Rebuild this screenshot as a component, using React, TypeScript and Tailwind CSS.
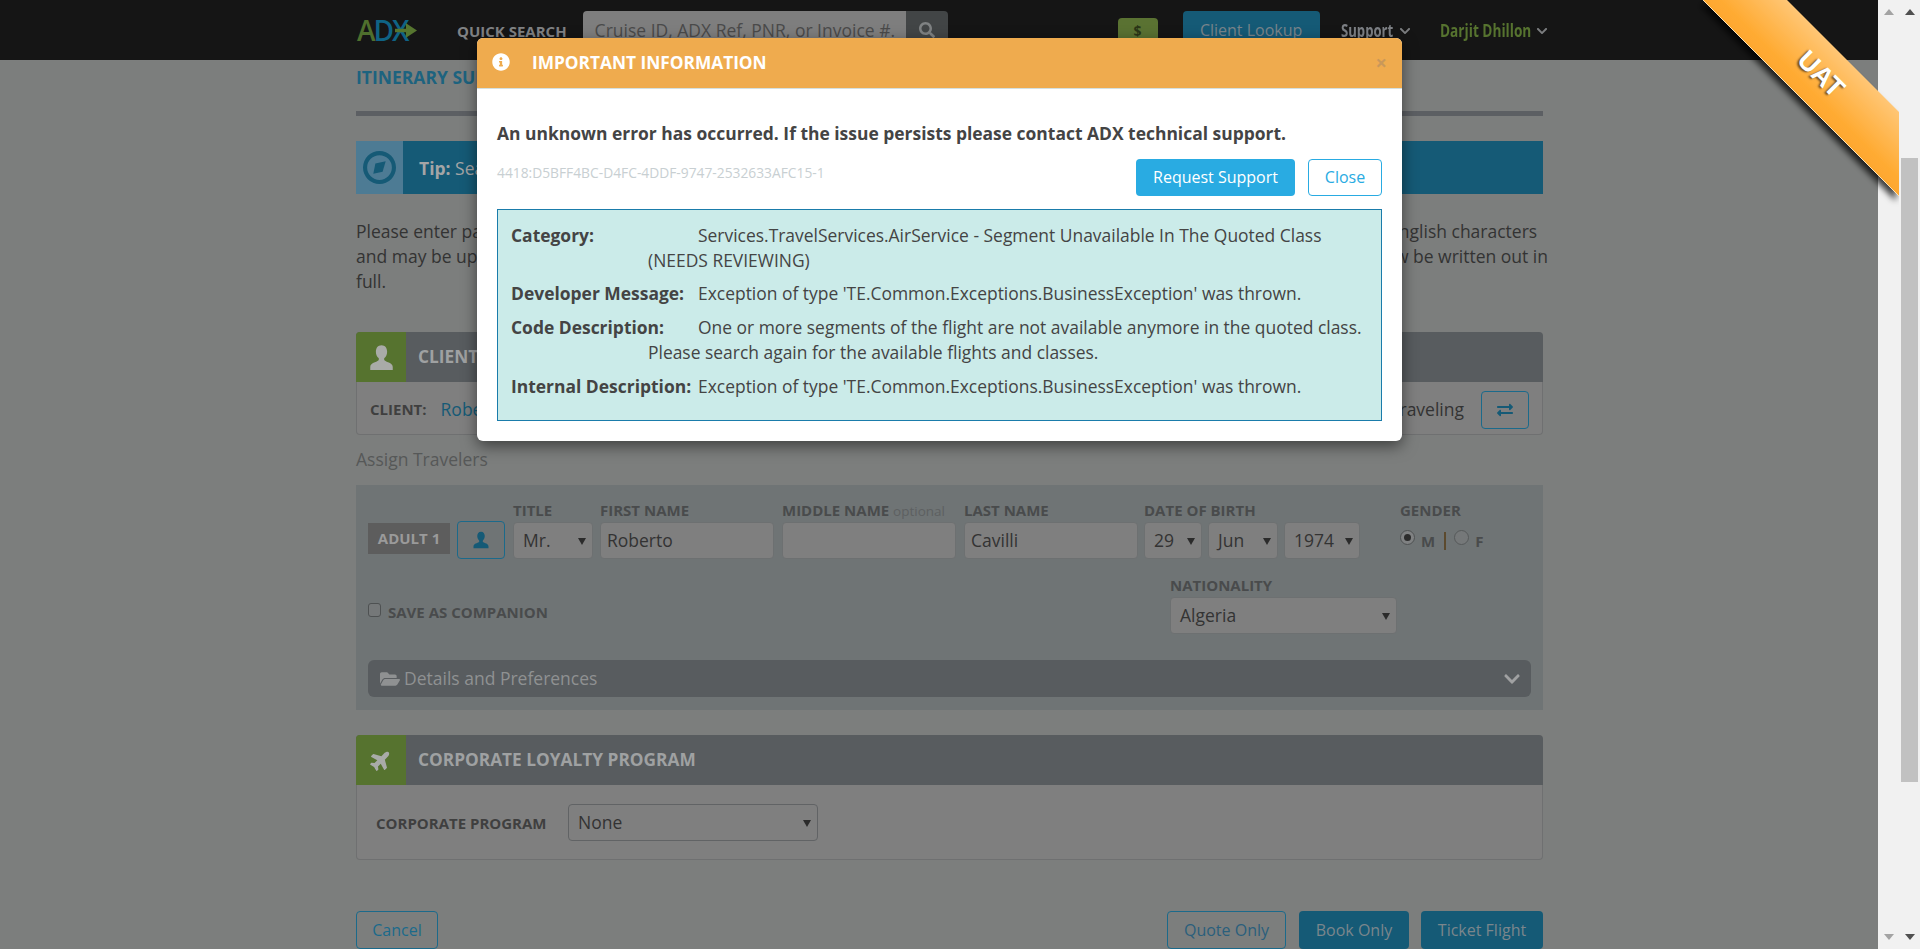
import React from "react";
import {
  FaChevronDown,
  FaExchangeAlt,
  FaFolderOpen,
  FaInfoCircle,
  FaPlane,
  FaSearch,
} from "react-icons/fa";

const font = "font-['Open_Sans',sans-serif]";

function UserIcon({ className }: { className?: string }) {
  return (
    <svg viewBox="0 0 24 24" className={className} fill="currentColor">
      <path d="M12 1c-3.2 0-5 2.500-5 5.800 0 2.300 1 4.400 2.400 5.700.4.400.4 1.600-.2 2.200C7.500 16.200 2 16.800 2 20.500V23h20v-2.500c0-3.700-5.500-4.300-7.200-5.800-.6-.6-.6-1.800-.2-2.200C16 11.200 17 9.100 17 6.800 17 3.500 15.200 1 12 1z" />
    </svg>
  );
}

function Caret({ className }: { className?: string }) {
  return (
    <svg viewBox="0 0 8 8" className={className ?? "w-2 h-2"} fill="#2b2b2b">
      <path d="M0 1h8L4 8z" />
    </svg>
  );
}

function Select({ value, width, dark }: { value: string; width: string; dark?: boolean }) {
  return (
    <div
      className={`${width} h-[37px] flex items-center justify-between pl-[9px] pr-[6px] rounded-[4px] border bg-[#7f7f7f] text-[17.500px] text-[#333333] ${
        dark ? "border-[#616365]" : "border-[#6d7071]"
      }`}
    >
      <span>{value}</span>
      <Caret />
    </div>
  );
}

function Field({ label, extra, children }: { label: string; extra?: string; children: React.ReactNode }) {
  return (
    <div className="flex flex-col">
      <div className="h-[21px] text-[15px] font-bold leading-[19px] text-[#494b4c] whitespace-nowrap">
        {label} {extra && <span className="font-normal text-[13.500px] text-[#5d6061]">{extra}</span>}
      </div>
      {children}
    </div>
  );
}

function TextInput({ value, width }: { value?: string; width: string }) {
  return (
    <div className={`${width} h-[37px] flex items-center px-[6px] rounded-[4px] border border-[#6d7071] bg-[#7f7f7f] text-[17.500px] text-[#333333]`}>
      {value}
    </div>
  );
}

function PanelHead({ icon, title }: { icon: React.ReactNode; title: string }) {
  return (
    <div className="h-[50px] flex bg-[#585c5f] rounded-t-[4px]">
      <div className="w-[50px] flex items-center justify-center bg-[#56732f] rounded-tl-[4px] text-[#a9aba8]">{icon}</div>
      <div className="pl-3 flex items-center text-[17.300px] font-bold text-[#9fa1a2]">{title}</div>
    </div>
  );
}

function Row({ label, gap, children }: { label: string; gap: string; children: React.ReactNode }) {
  return (
    <p className={`pl-[137px] -indent-[137px] leading-[25px] ${gap}`}>
      <span className="inline-block indent-0 w-[187px] font-bold">{label}</span>
      {children}
    </p>
  );
}

function ScrollbarTrack({ thumb, up, down }: { thumb?: boolean; up: string; down: string }) {
  return (
    <div className="relative w-[21px] shrink-0 bg-[#f1f1f1]">
      <svg viewBox="0 0 10 6" className="absolute top-[9px] left-[5.500px] w-[10px] h-[6px]" fill={up}>
        <path d="M5 0l5 6H0z" />
      </svg>
      {thumb && <div className="absolute left-[2px] top-[158px] w-[17px] h-[624px] bg-[#c1c1c1]" />}
      <svg viewBox="0 0 10 6" className="absolute top-[934px] left-[5.500px] w-[10px] h-[6px]" fill={down}>
        <path d="M0 0h10L5 6z" />
      </svg>
    </div>
  );
}

function Ribbon() {
  return (
    <div className="absolute left-[1683px] top-0 w-[216px] h-[230px] overflow-hidden">
      <svg width="216" height="230" className="absolute inset-0">
        <defs>
          <linearGradient id="ribb" gradientUnits="userSpaceOnUse" x1="104" y1="0" x2="44" y2="60">
            <stop offset="0" stopColor="#ffc675" />
            <stop offset="0.55" stopColor="#ffab33" />
            <stop offset="1" stopColor="#fb9f25" />
          </linearGradient>
          <filter id="ribs" x="-20%" y="-20%" width="140%" height="140%">
            <feDropShadow dx="-3" dy="5" stdDeviation="3" floodColor="#000" floodOpacity="0.75" />
          </filter>
        </defs>
        <polygon points="20,0 104,0 216,112 216,196" fill="url(#ribb)" filter="url(#ribs)" />
        <line x1="20" y1="0" x2="216" y2="196" stroke="#ffe0b0" strokeWidth="1" />
      </svg>
      <div className="absolute left-[108px] top-[54px] w-[60px] h-[40px] flex items-center justify-center rotate-45 font-['Liberation_Sans',sans-serif] font-bold text-[27px] text-white [text-shadow:-1px_2px_2px_rgba(0,0,0,0.55)]">
        UAT
      </div>
    </div>
  );
}

function Navbar() {
  return (
    <div className="h-[60px] bg-[#151515] flex pl-[357px] relative">
      <div className="relative w-[60px] h-[60px] flex items-center">
        <span className="text-[28px] font-semibold tracking-[-2px] leading-none">
          <span className="text-[#4f6f2d]">A</span>
          <span className="text-[#0f6385]">DX</span>
        </span>
        <svg viewBox="0 0 24 16" className="absolute left-[38px] top-[23px] w-[22px] h-[15px]" fill="#56752f">
          <path d="M0 6h12V0l12 8-12 8v-6H0z" />
        </svg>
      </div>
      <div className="ml-[40px] mt-[21px] text-[15px] font-bold leading-[20px] text-[#808284]">QUICK SEARCH</div>
      <div className="ml-[16px] mt-[11px] w-[365px] h-[38px] flex">
        <div className="w-[323px] bg-[#7e7e7e] rounded-l-[4px] pl-3 pt-[6px] text-[17.500px] text-[#4a4a4a] whitespace-nowrap overflow-hidden">
          Cruise ID, ADX Ref, PNR, or Invoice #.
        </div>
        <div className="w-[42px] bg-[#424546] rounded-r-[4px] flex items-center justify-center text-[#7f8283]">
          <FaSearch className="w-4 h-4" />
        </div>
      </div>
      <div className="ml-[170px] mt-[18px] w-[40px] h-[30px] bg-[#5a7232] rounded-[4px] flex justify-center text-sm font-bold pt-[3px] text-[#2a3517]">$</div>
      <div className="ml-[25px] mt-[11px] w-[137px] h-[38px] bg-[#155a76] rounded-[4px] flex items-center justify-center text-base text-[#78848b]">Client Lookup</div>
      <div className="ml-[21px] mt-[18px] flex items-start h-[24px] text-[#7d8085]">
        <span className="text-[17.500px] font-bold inline-block origin-left scale-x-[0.75] w-[56px] leading-[24px]">Support</span>
        <FaChevronDown className="ml-[2px] w-3 h-3 mt-[7px] text-[#7b7d7f]" />
      </div>
      <div className="ml-[29px] mt-[18px] flex items-start h-[24px] text-[#56732f]">
        <span className="text-[17.500px] font-bold inline-block origin-left scale-x-[0.78] w-[94px] whitespace-nowrap leading-[24px]">Darjit Dhillon</span>
        <FaChevronDown className="ml-[2px] w-3 h-3 mt-[7px] text-[#7b7d7f]" />
      </div>
    </div>
  );
}

function TravelerPanel() {
  return (
    <div className="h-[225px] bg-[#6f7475] px-3 pt-4">
      <div className="flex items-end h-[58px]">
        <div className="w-[82px] h-[31px] mb-[5px] bg-[#5d5d5d] flex items-center justify-center text-[15px] font-bold text-[#9a9a9a]">ADULT 1</div>
        <div className="ml-[7px] w-[48px] h-[38px] flex items-center justify-center rounded-[4px] border border-[#1b6a8b] text-[#155a76]">
          <UserIcon className="w-[18px] h-[18px]" />
        </div>
        <div className="ml-2">
          <Field label="TITLE"><Select value="Mr." width="w-[80px]" /></Field>
        </div>
        <div className="ml-[7px]">
          <Field label="FIRST NAME"><TextInput value="Roberto" width="w-[174px]" /></Field>
        </div>
        <div className="ml-2">
          <Field label="MIDDLE NAME" extra="optional"><TextInput width="w-[174px]" /></Field>
        </div>
        <div className="ml-2">
          <Field label="LAST NAME"><TextInput value="Cavilli" width="w-[174px]" /></Field>
        </div>
        <div className="ml-[6px]">
          <Field label="DATE OF BIRTH">
            <div className="flex gap-[6px]">
              <Select value="29" width="w-[58px]" />
              <Select value="Jun" width="w-[70px]" />
              <Select value="1974" width="w-[76px]" />
            </div>
          </Field>
        </div>
        <div className="ml-10 h-[58px] flex flex-col">
          <div className="h-[21px] text-[15px] font-bold leading-[19px] text-[#494b4c]">GENDER</div>
          <div className="mt-[8px] flex items-start text-[15px] leading-[20px] font-bold text-[#494b4c]">
            <span className="w-[15px] h-[15px] rounded-full border border-[#4e5152] bg-[#7f8182] flex items-center justify-center">
              <span className="w-[7px] h-[7px] rounded-full bg-[#2c2c2c]" />
            </span>
            <span className="ml-[6px] mt-[1px]">M</span>
            <span className="ml-[9px] mt-[2px] w-[2px] h-[18px] bg-[#5c4a2e]" />
            <span className="ml-[8px] w-[15px] h-[15px] rounded-full border border-[#56595a] bg-[#757879]" />
            <span className="ml-[6px] mt-[1px]">F</span>
          </div>
        </div>
      </div>
      <div className="mt-[17px] h-[58px] flex justify-between">
        <div className="flex items-start pt-[26px]">
          <span className="mt-[1px] w-[13px] h-[14px] rounded-[3px] border border-[#4e5152] bg-[#757879]" />
          <span className="ml-[7px] text-[15px] font-bold text-[#494b4c] leading-[20px]">SAVE AS COMPANION</span>
        </div>
        <div className="mr-[134px] flex flex-col">
          <Field label="NATIONALITY"><Select value="Algeria" width="w-[227px]" /></Field>
        </div>
      </div>
      <div className="mt-[26px] h-[37px] rounded-[6px] bg-[#585c5f] flex items-center justify-between pl-3 pr-[10px] text-[17.500px] text-[#8f9192]">
        <span className="flex items-center gap-[4px]">
          <FaFolderOpen className="w-[20px] h-[18px] text-[#8f9192]" />
          Details and Preferences
        </span>
        <FaChevronDown className="w-[18px] h-[18px] text-[#a0a1a2]" />
      </div>
    </div>
  );
}

function Page() {
  return (
    <div className="w-[1878px] shrink-0 bg-[#7c7e7d] overflow-hidden">
      <Navbar />
      <div className="ml-[356px] w-[1187px]">
        <div className="mt-[5px] h-6 text-[17.500px] font-bold leading-6 text-[#1d637f]">ITINERARY SUMMARY</div>
        <div className="mt-[22px] h-[5px] bg-[#5c5f63]" />
        <div className="mt-[25px] h-[53px] flex bg-[#155a76]">
          <div className="w-[47px] flex items-center justify-center bg-[#4d7b94]">
            <svg viewBox="0 0 32 32" className="w-[33px] h-[33px]" fill="#155a76">
              <path fillRule="evenodd" d="M16 0a16 16 0 1 0 0 32 16 16 0 0 0 0-32zm0 4a12 12 0 1 1 0 24 12 12 0 0 1 0-24z" />
              <path d="M22 10l-3 10-9 2 2-10z" />
            </svg>
          </div>
          <div className="pl-4 pt-[1px] flex items-center text-[17.500px] text-[#a4a5a6]">
            <b>Tip:</b>&nbsp;Search
          </div>
        </div>
        <p className="mt-[25px] text-[17.500px] leading-[25px] text-[#333333] whitespace-nowrap">
          Please enter passenger names exactly as they appear on the passports of every guest. Names must be entered using standard English characters
          <br />
          and may be upper or lower case. Hyphens and spaces are allowed. Middle names are optional, but first and last names must now be written out in
          <br />
          full.
        </p>
        <div className="mt-[38px]">
          <PanelHead icon={<UserIcon className="w-[27px] h-[27px]" />} title="CLIENT" />
          <div className="h-[53px] border border-t-0 border-[#6f7071] rounded-b-[4px] bg-[#7f7f7f] flex items-center justify-between pl-[13px] pr-[13px] pt-[3px]">
            <div className="flex items-center">
              <span className="text-[15px] font-bold text-[#3f3f3f]">CLIENT:</span>
              <span className="ml-[14px] text-[17.500px] text-[#155a76]">Roberto Cavilli</span>
            </div>
            <div className="flex items-center">
              <span className="text-[17.500px] text-[#333333]">Client is traveling</span>
              <div className="ml-[17px] w-[48px] h-[38px] flex items-center justify-center rounded-[4px] border border-[#1b6a8b] text-[#155a76]">
                <FaExchangeAlt className="w-[18px] h-[16px]" />
              </div>
            </div>
          </div>
        </div>
        <div className="mt-[12px] h-[24px] text-[17.500px] leading-[24px] text-[#565858]">Assign Travelers</div>
        <div className="mt-[14px]">
          <TravelerPanel />
        </div>
        <div className="mt-[25px]">
          <PanelHead icon={<FaPlane className="w-[22px] h-[22px] -rotate-45" />} title="CORPORATE LOYALTY PROGRAM" />
          <div className="h-[75px] border border-t-0 border-[#6f7071] rounded-b-[4px] bg-[#7f7f7f] flex items-start pt-[19px] pl-[19px]">
            <span className="mt-[8px] w-[192px] text-[15px] font-bold text-[#3f3f3f]">CORPORATE PROGRAM</span>
            <Select value="None" width="w-[250px]" dark />
          </div>
        </div>
        <div className="mt-[51px] flex justify-between text-base">
          <div className="w-[82px] h-[38px] flex items-center justify-center rounded-[4px] border border-[#1b6a8b] text-[#1b6a8b]">Cancel</div>
          <div className="flex">
            <div className="w-[119px] h-[38px] flex items-center justify-center rounded-[4px] border border-[#1b6a8b] text-[#2a5f7c]">Quote Only</div>
            <div className="ml-[13px] w-[110px] h-[38px] flex items-center justify-center rounded-[4px] bg-[#155a76] text-[#7b868c]">Book Only</div>
            <div className="ml-3 w-[122px] h-[38px] flex items-center justify-center rounded-[4px] bg-[#155a76] text-[#7b868c]">Ticket Flight</div>
          </div>
        </div>
      </div>
    </div>
  );
}

function Modal() {
  return (
    <div className="absolute left-[477px] top-[38px] w-[925px] h-[403px] bg-white rounded-[6px] shadow-[0_5px_15px_rgba(0,0,0,0.5)] overflow-hidden text-[#444444]">
      <div className="h-[51px] bg-[#efab4e] border-b border-[#d4e0e0] flex items-center justify-between pl-[15px] pr-[15px]">
        <div className="flex items-center">
          <FaInfoCircle className="w-[18px] h-[18px] text-white -mt-[2px]" />
          <span className="ml-[22px] text-[17.300px] font-bold text-white -mt-[1px]">IMPORTANT INFORMATION</span>
        </div>
        <span className="text-[20px] font-bold text-[#c9985a] leading-none">×</span>
      </div>
      <div className="px-5">
        <div className="mt-[32px] h-6 text-[17.450px] font-bold leading-6">
          An unknown error has occurred. If the issue persists please contact ADX technical support.
        </div>
        <div className="mt-[14px] flex justify-between items-start">
          <span className="mt-[4px] text-[13.800px] leading-[20px] text-[#c8cfd2]">4418:D5BFF4BC-D4FC-4DDF-9747-2532633AFC15-1</span>
          <div className="flex gap-[13px] text-base">
            <div className="w-[159px] h-[37px] pb-[2px] flex items-center justify-center rounded-[4px] bg-[#29abe2] text-white">Request Support</div>
            <div className="w-[74px] h-[37px] pb-[2px] flex items-center justify-center rounded-[4px] border border-[#29abe2] text-[#29abe2]">Close</div>
          </div>
        </div>
        <div className="mt-[13px] h-[212px] border border-[#1a7cab] bg-[#cbebe9] pt-[13px] pl-[13px] pr-2 text-[17.450px]">
          <Row label="Category:" gap="mb-[8px]">Services.TravelServices.AirService - Segment Unavailable In The Quoted Class (NEEDS REVIEWING)</Row>
          <Row label="Developer Message:" gap="mb-[9px]">Exception of type 'TE.Common.Exceptions.BusinessException' was thrown.</Row>
          <Row label="Code Description:" gap="mb-[9px]">One or more segments of the flight are not available anymore in the quoted class. Please search again for the available flights and classes.</Row>
          <Row label="Internal Description:" gap="mb-0">Exception of type 'TE.Common.Exceptions.BusinessException' was thrown.</Row>
        </div>
      </div>
    </div>
  );
}

export default function App() {
  return (
    <div className={`${font} relative w-[1920px] h-[949px] overflow-hidden flex`}>
      <Page />
      <ScrollbarTrack up="#a3a3a3" down="#a3a3a3" />
      <ScrollbarTrack thumb up="#505050" down="#505050" />
      <Ribbon />
      <Modal />
    </div>
  );
}
